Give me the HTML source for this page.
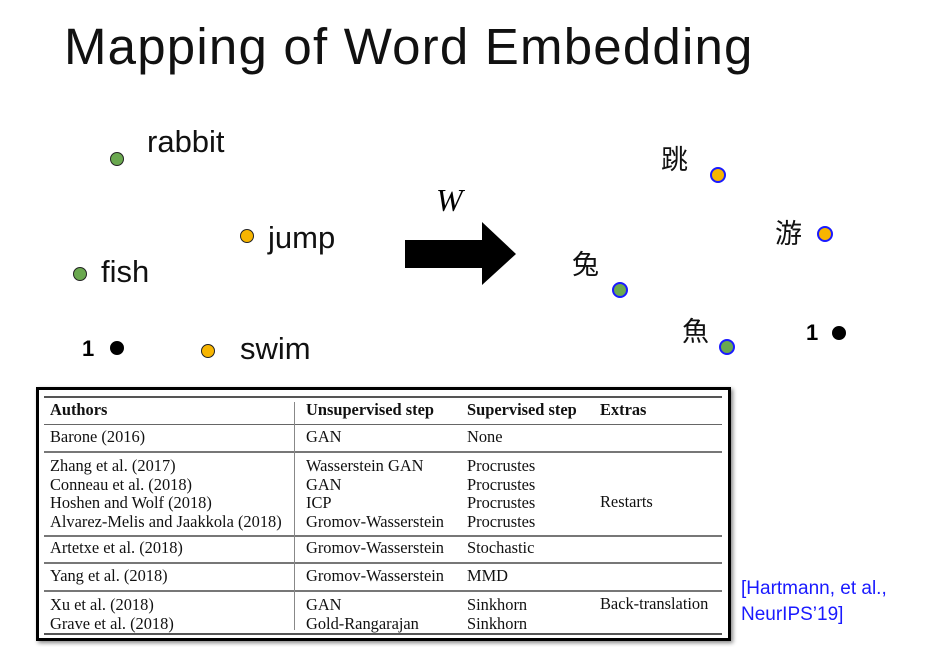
<!DOCTYPE html>
<html><head><meta charset="utf-8"><style>
body{margin:0;width:928px;height:647px;background:#fff;position:relative;overflow:hidden;font-family:"Liberation Sans","Noto Sans CJK JP",sans-serif;}
.a{position:absolute;white-space:nowrap;line-height:1;}
.d{position:absolute;width:12px;height:12px;border-radius:50%;border:1.5px solid #222;}
.g{background:#6aa84f}.y{background:#f7b500}
.b{border-color:#1a1aff;border-width:2px}
.k{background:#000;border-color:#000}
.w{font-size:31px;color:#111}
.c{font-size:27px;color:#111}
.t{position:absolute;font-family:"Liberation Serif",serif;font-size:16.4px;color:#111;line-height:1;white-space:nowrap}
.hl{position:absolute;left:44px;width:678px;height:1px;background:#666}
</style></head><body>
<div class="a" style="left:64px;top:21px;font-size:51px;color:#111;letter-spacing:1.2px">Mapping of Word Embedding</div>

<div class="d g" style="left:110px;top:152px"></div>
<div class="a w" style="left:147px;top:126px">rabbit</div>
<div class="d y" style="left:240px;top:229px"></div>
<div class="a w" style="left:268px;top:222px">jump</div>
<div class="d g" style="left:73px;top:267px"></div>
<div class="a w" style="left:101px;top:256px">fish</div>
<div class="a" style="left:82px;top:338px;font-size:22px;font-weight:bold">1</div>
<div class="d k" style="left:110px;top:341px"></div>
<div class="d y" style="left:201px;top:344px"></div>
<div class="a w" style="left:240px;top:333px">swim</div>

<div class="a" style="left:436px;top:184px;font-size:32px;font-style:italic;font-family:'Liberation Serif',serif">W</div>
<svg class="a" style="left:405px;top:222px" width="112" height="64"><polygon points="0,18 77,18 77,0 111,32 77,63 77,46 0,46" fill="#000"/></svg>

<div class="a c" style="left:661px;top:147px">跳</div>
<div class="d y b" style="left:710px;top:167px"></div>
<div class="a c" style="left:775px;top:221px">游</div>
<div class="d y b" style="left:817px;top:226px"></div>
<div class="a c" style="left:572px;top:252px">兔</div>
<div class="d g b" style="left:612px;top:282px"></div>
<div class="a c" style="left:682px;top:319px">魚</div>
<div class="d g b" style="left:719px;top:339px"></div>
<div class="a" style="left:806px;top:322px;font-size:22px;font-weight:bold">1</div>
<div class="d k" style="left:832px;top:326px"></div>

<div style="position:absolute;left:36px;top:387px;width:689px;height:248px;border:3px solid #000;box-shadow:2px 2px 4px #888"></div>
<div class="hl" style="top:396px;height:2px;background:#555"></div>
<div class="hl" style="top:424px"></div>
<div class="hl" style="top:451px;height:2px;background:#777"></div>
<div class="hl" style="top:535px;height:2px;background:#777"></div>
<div class="hl" style="top:562px;height:2px;background:#777"></div>
<div class="hl" style="top:590px;height:2px;background:#777"></div>
<div class="hl" style="top:633px;height:2px;background:#555"></div>
<div style="position:absolute;left:294px;top:402px;width:1px;height:228px;background:#888"></div>

<div class="t" style="left:50px;top:402px;font-weight:bold">Authors</div>
<div class="t" style="left:306px;top:402px;font-weight:bold">Unsupervised step</div>
<div class="t" style="left:467px;top:402px;font-weight:bold">Supervised step</div>
<div class="t" style="left:600px;top:402px;font-weight:bold">Extras</div>

<div class="t" style="left:50px;top:429px">Barone (2016)</div>
<div class="t" style="left:306px;top:429px">GAN</div>
<div class="t" style="left:467px;top:429px">None</div>

<div class="t" style="left:50px;top:457px;line-height:18.5px">Zhang et al. (2017)<br>Conneau et al. (2018)<br>Hoshen and Wolf (2018)<br>Alvarez-Melis and Jaakkola (2018)</div>
<div class="t" style="left:306px;top:457px;line-height:18.5px">Wasserstein GAN<br>GAN<br>ICP<br>Gromov-Wasserstein</div>
<div class="t" style="left:467px;top:457px;line-height:18.5px">Procrustes<br>Procrustes<br>Procrustes<br>Procrustes</div>
<div class="t" style="left:600px;top:494px">Restarts</div>

<div class="t" style="left:50px;top:540px">Artetxe et al. (2018)</div>
<div class="t" style="left:306px;top:540px">Gromov-Wasserstein</div>
<div class="t" style="left:467px;top:540px">Stochastic</div>

<div class="t" style="left:50px;top:568px">Yang et al. (2018)</div>
<div class="t" style="left:306px;top:568px">Gromov-Wasserstein</div>
<div class="t" style="left:467px;top:568px">MMD</div>

<div class="t" style="left:50px;top:596px;line-height:18.5px">Xu et al. (2018)<br>Grave et al. (2018)</div>
<div class="t" style="left:306px;top:596px;line-height:18.5px">GAN<br>Gold-Rangarajan</div>
<div class="t" style="left:467px;top:596px;line-height:18.5px">Sinkhorn<br>Sinkhorn</div>
<div class="t" style="left:600px;top:596px">Back-translation</div>

<div class="a" style="left:741px;top:576px;font-size:19px;color:#1a1aff;line-height:26px">[Hartmann, et al.,<br>NeurIPS’19]</div>
</body></html>
